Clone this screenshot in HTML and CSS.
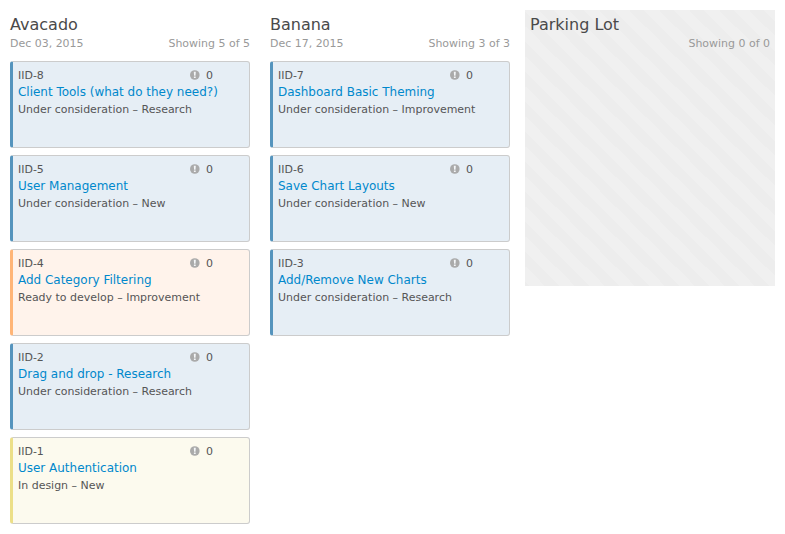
FILE: index.html
```
<!DOCTYPE html>
<html lang="en">
<head>
<meta charset="utf-8">
<title>Releases</title>
<link rel="stylesheet" href="styles.css">
</head>
<body>
<svg class="defs" width="0" height="0"><symbol id="alert" viewBox="0 0 10 10"><circle cx="4.8" cy="5" r="4.8" fill="#aaa"/><path d="M3.8 1.8h2l-.3 3.9H4.1zM3.9 6.5h1.8v1.6H3.9z" fill="#f4f6f8"/></symbol></svg>
<main class="board">
<section class="column">
<header><h2>Avacado</h2><div class="meta"><span>Dec 03, 2015</span><span>Showing 5 of 5</span></div></header>
<article class="card blue"><div class="top"><span>IID-8</span><span class="count"><svg><use href="#alert"/></svg>0</span></div><a>Client Tools (what do they need?)</a><p>Under consideration – Research</p></article>
<article class="card blue"><div class="top"><span>IID-5</span><span class="count"><svg><use href="#alert"/></svg>0</span></div><a>User Management</a><p>Under consideration – New</p></article>
<article class="card orange"><div class="top"><span>IID-4</span><span class="count"><svg><use href="#alert"/></svg>0</span></div><a>Add Category Filtering</a><p>Ready to develop – Improvement</p></article>
<article class="card blue"><div class="top"><span>IID-2</span><span class="count"><svg><use href="#alert"/></svg>0</span></div><a>Drag and drop - Research</a><p>Under consideration – Research</p></article>
<article class="card yellow"><div class="top"><span>IID-1</span><span class="count"><svg><use href="#alert"/></svg>0</span></div><a>User Authentication</a><p>In design – New</p></article>
</section>
<section class="column">
<header><h2>Banana</h2><div class="meta"><span>Dec 17, 2015</span><span>Showing 3 of 3</span></div></header>
<article class="card blue"><div class="top"><span>IID-7</span><span class="count"><svg><use href="#alert"/></svg>0</span></div><a>Dashboard Basic Theming</a><p>Under consideration – Improvement</p></article>
<article class="card blue"><div class="top"><span>IID-6</span><span class="count"><svg><use href="#alert"/></svg>0</span></div><a>Save Chart Layouts</a><p>Under consideration – New</p></article>
<article class="card blue"><div class="top"><span>IID-3</span><span class="count"><svg><use href="#alert"/></svg>0</span></div><a>Add/Remove New Charts</a><p>Under consideration – Research</p></article>
</section>
<section class="column parking">
<header><h2>Parking Lot</h2><div class="meta"><span></span><span>Showing 0 of 0</span></div></header>
</section>
</main>
</body>
</html>
```
FILE: styles.css
```
* { box-sizing: border-box; }
body { margin: 0; background: #fff; color: #555; font: 10.98px/18px "DejaVu Sans", sans-serif; }
.defs { position: absolute; }
.board { display: flex; align-items: flex-start; gap: 10px; padding: 10px 10px 0 5px; }
.column { flex: none; width: 250px; padding: 0 5px; }
header { height: 51px; padding-top: 5px; }
h2 { margin: 0; font-size: 16px; line-height: 20px; font-weight: 400; color: #4a4a4a; }
.meta { display: flex; justify-content: space-between; color: #999; }
.card { height: 87px; margin-bottom: 7px; padding: 5px; border: 1px solid #ccc; border-left-width: 3px; border-radius: 3px; }
.top { display: flex; justify-content: space-between; height: 16px; padding-right: 31px; }
.count { display: flex; align-items: center; gap: 6px; height: 18px; }
.count svg { width: 10px; height: 10px; margin-bottom: 2px; }
.card a { display: block; font-size: 11.98px; line-height: 18px; color: #08c; }
.card p { margin: 0; }
.blue { background: #e6eef5; border-left-color: #5594bd; }
.orange { background: #fff3eb; border-left-color: #ffb577; }
.yellow { background: #fcfaee; border-left-color: #ecdf88; }
.parking { height: 276px; background: linear-gradient(45deg, #f0f0f0 25%, #ededed 25% 50%, #f0f0f0 50% 75%, #ededed 75%) 0 1px / 30px 30px; }
```
